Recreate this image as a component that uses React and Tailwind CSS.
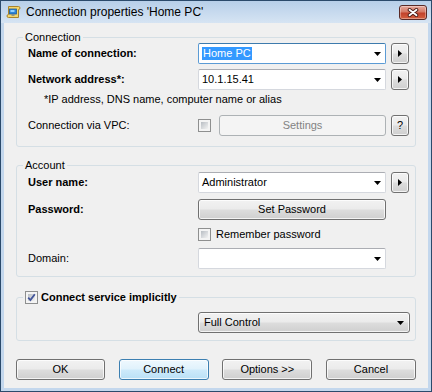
import React from 'react';

const face =
  'flex items-center rounded-[3px] border border-[#707070] bg-[linear-gradient(#f2f2f2_0%,#ebebeb_48%,#dddddd_52%,#cfcfcf_100%)] shadow-[inset_0_0_0_1px_rgba(255,255,255,0.75)]';
const btn = `${face} justify-center`;

const DownTri = () => (
  <svg width="7" height="4" viewBox="0 0 7 4">
    <polygon points="0,0 7,0 3.5,4" fill="#000" />
  </svg>
);

const RightTri = () => (
  <svg width="4" height="7" viewBox="0 0 4 7">
    <polygon points="0,0 4,3.5 0,7" fill="#000" />
  </svg>
);

const Combo = ({ value, focused, children }) => (
  <div
    className={`flex h-[21px] w-[188px] items-center rounded-[2px] border bg-white pl-[2px] pr-[4px] ${
      focused ? 'border-[#5b9bd5] border-t-[#3d7bad]' : 'border-[#d5d8de] border-t-[#abadb3]'
    }`}
  >
    {children || <span className="pl-[1px]">{value}</span>}
    <span className="ml-auto flex">
      <DownTri />
    </span>
  </div>
);

const ArrowBtn = () => (
  <div className={`${btn} ml-[5px] h-[21px] w-[18px]`}>
    <RightTri />
  </div>
);

const Check = ({ checked }) => (
  <span className="relative flex h-[13px] w-[13px] shrink-0 border border-[#8e8f8f] bg-[#f4f4f4] p-[2px]">
    <span className="h-full w-full bg-[linear-gradient(135deg,#b8bdc3,#f3f3f3)]" />
    {checked && (
      <svg className="absolute left-[1px] top-[1px]" width="9" height="9" viewBox="0 0 9 9">
        <path d="M1.2 4.6 L3.4 7 L7.8 1.2" stroke="#42559a" strokeWidth="1.8" fill="none" />
      </svg>
    )}
  </span>
);

const Row = ({ label, bold, className = '', children }) => (
  <div className={`flex h-[21px] items-center pl-[11px] ${className}`}>
    <span className={`w-[170px] ${bold ? 'font-bold' : ''}`}>{label}</span>
    {children}
  </div>
);

const AppIcon = () => (
  <svg width="16" height="16" viewBox="0 0 16 16">
    <path d="M2.5 2.5 h10 a1.5 1.5 0 0 1 0 3 v8 h-10 a1.5 1.5 0 0 1 0 -3 z" fill="#f5d66a" stroke="#a8842c" />
    <rect x="3.5" y="5" width="7" height="5" fill="#2f86d8" stroke="#1d5a9c" strokeWidth="0.8" />
    <rect x="4.5" y="6" width="4" height="2" fill="#8fd0ff" />
    <rect x="5.5" y="10.5" width="3" height="1.2" fill="#6a7f96" />
  </svg>
);

export default function App() {
  return (
    <div className="flex h-[392px] w-[432px] flex-col border border-[#2b4a6b] bg-[#c3d7ed] font-['Liberation_Sans',Arial,sans-serif] text-[11px] text-black">
      <div className="flex h-[22px] items-center bg-[linear-gradient(#b7cfe9,#d6e4f3)] pl-[5px] pr-[4px]">
        <AppIcon />
        <span className="ml-[4px] text-[12px]">Connection properties 'Home PC'</span>
        <div className="ml-auto flex h-[15px] w-[28px] items-center justify-center rounded-[3px] border border-[#5a2a26] bg-[linear-gradient(#e7a99d,#d57a66_45%,#c2422c_55%,#d4603f)] shadow-[inset_0_0_0_1px_rgba(255,255,255,0.35)]">
          <svg width="12" height="9" viewBox="0 0 12 9">
            <path d="M2.5 1.8 L9.5 7.2 M9.5 1.8 L2.5 7.2" stroke="#4a1c16" strokeWidth="3.6" strokeLinecap="round" />
            <path d="M2.5 1.8 L9.5 7.2 M9.5 1.8 L2.5 7.2" stroke="#fff" strokeWidth="1.8" strokeLinecap="round" />
          </svg>
        </div>
      </div>

      <div className="mx-[3px] mb-[3px] flex flex-1 flex-col bg-[#f0f0f0]">
        <fieldset className="ml-[12px] mt-[8px] w-[400px] rounded-[3px] border border-[#d5dfe5] pb-[10px] pr-[6px]">
          <legend className="ml-[6px] px-[2px] leading-[12px]">Connection</legend>
          <Row label="Name of connection:" bold>
            <Combo focused>
              <span className="ml-[1px] bg-[#3399ff] px-[1px] leading-[13px] text-white">Home PC</span>
            </Combo>
            <ArrowBtn />
          </Row>
          <Row label="Network address*:" bold className="mt-[5px]">
            <Combo value="10.1.15.41" />
            <ArrowBtn />
          </Row>
          <div className="mt-[3px] pl-[27px] leading-[13px]">*IP address, DNS name, computer name or alias</div>
          <Row label="Connection via VPC:" className="mt-[9px]">
            <Check />
            <div className="ml-[8px] flex h-[21px] flex-1 items-center justify-center rounded-[3px] border border-[#adb2b5] bg-[#f4f4f4] text-[#838383]">
              Settings
            </div>
            <div className={`${btn} ml-[5px] h-[21px] w-[18px]`}>?</div>
          </Row>
        </fieldset>

        <fieldset className="ml-[12px] mt-[12px] w-[400px] rounded-[3px] border border-[#d5dfe5] pb-[7px] pr-[6px] pt-[1px]">
          <legend className="ml-[6px] px-[2px] leading-[12px]">Account</legend>
          <Row label="User name:" bold>
            <Combo value="Administrator" />
            <ArrowBtn />
          </Row>
          <Row label="Password:" bold className="mt-[6px]">
            <div className={`${btn} h-[21px] w-[188px]`}>Set Password</div>
          </Row>
          <div className="mt-[8px] flex h-[13px] items-center pl-[181px]">
            <Check />
            <span className="ml-[5px]">Remember password</span>
          </div>
          <Row label="Domain:" className="mt-[7px]">
            <Combo value="" />
          </Row>
        </fieldset>

        <fieldset className="ml-[12px] mt-[14px] w-[400px] rounded-[3px] border border-[#d5dfe5] pb-[7px] pt-[8px]">
          <legend className="ml-[6px] flex items-center gap-[3px] px-[2px] leading-[13px]">
            <Check checked />
            <span className="font-bold">Connect service implicitly</span>
          </legend>
          <div className="pl-[181px]">
            <div className={`${face} h-[21px] w-[212px] justify-between pl-[5px] pr-[5px]`}>
              <span>Full Control</span>
              <DownTri />
            </div>
          </div>
        </fieldset>

        <div className="ml-[12px] mt-[18px] flex w-[400px] justify-between">
          <div className={`${btn} h-[21px] w-[89px]`}>OK</div>
          <div className="flex h-[21px] w-[90px] items-center justify-center rounded-[3px] border border-[#3c7fb1] bg-[linear-gradient(#eef8fe_0%,#e0f2fc_48%,#cdeafb_52%,#b9e0f6_100%)] shadow-[inset_0_0_0_1px_rgba(255,255,255,0.7)]">
            Connect
          </div>
          <div className={`${btn} h-[21px] w-[90px]`}>Options &gt;&gt;</div>
          <div className={`${btn} h-[21px] w-[90px]`}>Cancel</div>
        </div>
      </div>
    </div>
  );
}
